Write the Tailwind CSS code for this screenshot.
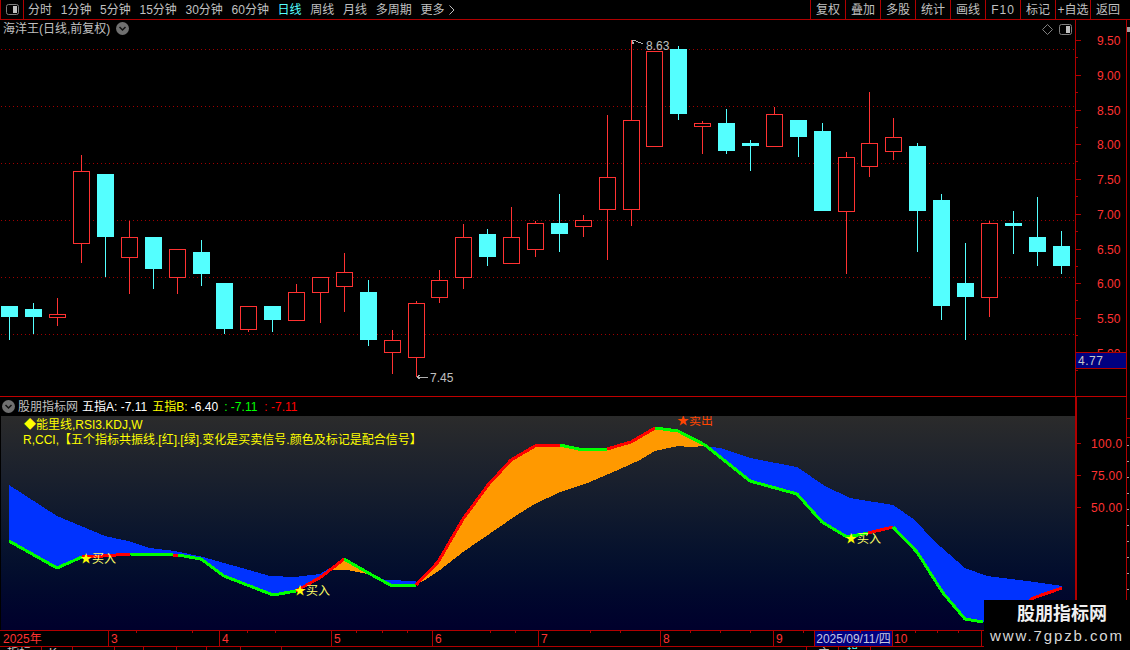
<!DOCTYPE html>
<html lang="zh-CN">
  <head>
    <meta charset="UTF-8" />
    <title>海洋王 日线</title>
    <script src="https://cdn.jsdelivr.net/npm/@tailwindcss/browser@4"></script>
  </head>
  <body class="bg-black">
    <div class="relative w-[1130px] h-[650px] overflow-hidden flex flex-col bg-black text-[12px] leading-none text-[#c0c0c0] font-['Liberation_Sans','Noto_Sans_CJK_SC',sans-serif]">
      <!-- top toolbar -->
      <div class="h-[20px] shrink-0 flex items-stretch border-b border-[#b00000]">
        <div class="w-[24px] flex items-center justify-center border-r border-l border-[#b00000]">
          <svg width="13" height="11" viewBox="0 0 13 11">
            <rect x="0.5" y="0.5" width="12" height="10" rx="2" fill="none" stroke="#808080" />
            <rect x="7" y="2" width="4" height="7" fill="#c0c0c0" />
          </svg>
        </div>
        <div class="flex items-center gap-[8.7px] pl-[4px]">
          <span>分时</span>
          <span>1分钟</span>
          <span>5分钟</span>
          <span>15分钟</span>
          <span>30分钟</span>
          <span>60分钟</span>
          <span class="text-[#55ffff]">日线</span>
          <span>周线</span>
          <span>月线</span>
          <span>多周期</span>
          <span class="flex items-center gap-[5px]">更多
            <svg width="6" height="10" viewBox="0 0 6 10"><path d="M0.5 0.5 L5 5 L0.5 9.5" fill="none" stroke="#c0c0c0" /></svg>
          </span>
        </div>
        <div class="ml-auto flex items-stretch mr-[5px]">
          <span class="w-[35px] flex items-center justify-center border-l border-[#b00000]">复权</span>
          <span class="w-[35px] flex items-center justify-center border-l border-[#b00000]">叠加</span>
          <span class="w-[35px] flex items-center justify-center border-l border-[#b00000]">多股</span>
          <span class="w-[35px] flex items-center justify-center border-l border-[#b00000]">统计</span>
          <span class="w-[35px] flex items-center justify-center border-l border-[#b00000]">画线</span>
          <span class="w-[35px] flex items-center justify-center border-l border-[#b00000] tracking-[1px]">F10</span>
          <span class="w-[35px] flex items-center justify-center border-l border-[#b00000]">标记</span>
          <span class="w-[35px] flex items-center justify-center border-l border-[#b00000]">+自选</span>
          <span class="w-[35px] flex items-center justify-center border-l border-[#b00000]">返回</span>
        </div>
      </div>

      <!-- price pane -->
      <div class="relative h-[376px] shrink-0 flex">
        <svg id="candles" class="block" width="1075" height="376" viewBox="0 20 1075 376" shape-rendering="crispEdges"></svg>
        <svg id="price-axis" class="block" width="55" height="376" viewBox="1075 20 55 376" shape-rendering="crispEdges"></svg>
        <div class="absolute left-[3px] top-[2px] flex items-center gap-[6px]">
          <span>海洋王(日线,前复权)</span>
          <svg width="13" height="13" viewBox="0 0 13 13">
            <circle cx="6.5" cy="6.5" r="6.5" fill="#707070" />
            <path d="M3.5 5 L6.5 8 L9.5 5" fill="none" stroke="#111" stroke-width="1.5" />
          </svg>
        </div>
        <div class="absolute left-[1042px] top-[4px] flex items-center gap-[6px]">
          <svg width="11" height="11" viewBox="0 0 11 11"><path d="M5.5 0.5 L10.5 5.5 L5.5 10.5 L0.5 5.5 Z" fill="none" stroke="#808080" /></svg>
          <svg width="13" height="11" viewBox="0 0 13 11">
            <rect x="0.5" y="0.5" width="12" height="10" rx="2" fill="none" stroke="#808080" />
            <rect x="7" y="2" width="4" height="7" fill="#c0c0c0" />
          </svg>
        </div>
        <div class="absolute left-[1075px] top-[332px] w-[52px] h-[17px] flex items-center pl-[2px] bg-[#000080] border border-[#b00000] text-[#c8c8c8] tracking-[0.5px]">4.77</div>
      </div>

      <div class="h-[1px] w-[1127px] shrink-0 bg-[#c00000]"></div>

      <!-- indicator pane -->
      <div class="h-[233px] shrink-0 flex">
        <div class="w-[1075px] flex flex-col">
          <div class="h-[19px] shrink-0 flex items-center pl-[2px]">
            <svg width="13" height="13" viewBox="0 0 13 13">
              <circle cx="6.5" cy="6.5" r="6.5" fill="#707070" />
              <path d="M3.5 5 L6.5 8 L9.5 5" fill="none" stroke="#111" stroke-width="1.5" />
            </svg>
            <span class="ml-[3px]">股朋指标网</span>
            <span class="ml-[4px] text-white">五指A: -7.11</span>
            <span class="ml-[5px] text-[#ffff00]">五指B: <span class="text-white">-6.40</span></span>
            <span class="ml-[6px] text-[#00ff00]">: -7.11</span>
            <span class="ml-[7px] text-[#ff0000]">: -7.11</span>
          </div>
          <div class="relative flex-1 ml-[1px] bg-linear-to-b from-[#2b2b2b] to-[#00002c]">
            <svg id="indicator" class="absolute inset-0 block" width="1074" height="214" viewBox="1 416 1074 214" shape-rendering="crispEdges"></svg>
            <div class="relative pl-[22px] pt-[2px] text-[#ffff00] leading-[15px]">
              <p class="pl-[1px]">◆能里线,RSI3.KDJ,W</p>
              <p>R,CCI,【五个指标共振线.[红].[绿].变化是买卖信号.颜色及标记是配合信号】</p>
            </div>
          </div>
        </div>
        <svg id="indicator-axis" class="block" width="55" height="233" viewBox="1075 397 55 233" shape-rendering="crispEdges"></svg>
      </div>

      <!-- time axis -->
      <div class="relative h-[17px] shrink-0 flex w-[1127px] border-t border-b border-[#b00000] text-[#ff3232] items-stretch">
        <span class="w-[108px] pl-[3px] flex items-center">2025年</span>
        <span class="w-[111px] pl-[2px] flex items-center border-l border-[#b00000]">3</span>
        <span class="w-[112px] pl-[2px] flex items-center border-l border-[#b00000]">4</span>
        <span class="w-[101px] pl-[2px] flex items-center border-l border-[#b00000]">5</span>
        <span class="w-[106px] pl-[2px] flex items-center border-l border-[#b00000]">6</span>
        <span class="w-[122px] pl-[2px] flex items-center border-l border-[#b00000]">7</span>
        <span class="w-[113px] pl-[2px] flex items-center border-l border-[#b00000]">8</span>
        <span class="w-[41px] pl-[2px] flex items-center border-l border-[#b00000]">9</span>
        <span class="w-[79px] flex items-center justify-center border-l border-r border-[#b00000] bg-[#000080] text-[#c8c8e0] whitespace-nowrap">2025/09/11/四</span>
        <span class="w-[88px] pl-[1px] flex items-center">10</span>
        <span class="w-[2px] border-l border-[#b00000]"></span>
        <svg id="time-ticks" class="absolute left-0 top-0" width="1075" height="3" shape-rendering="crispEdges"></svg>
      </div>

      <!-- clipped tab row along the bottom edge -->
      <div class="h-[3px] overflow-hidden flex items-start w-[1127px]">
        <span class="w-[42px] pl-[7px] border-r border-[#b00000] h-[3px]">指标</span>
        <span class="w-[31px] pl-[7px] border-r border-[#b00000] h-[3px]">K</span>
        <span class="w-[42px] border-r border-[#b00000] h-[3px]"></span>
        <span class="w-[29px] border-r border-[#b00000] h-[3px]"></span>
        <span class="w-[33px] border-r border-[#b00000] h-[3px]"></span>
        <span class="w-[30px] border-r border-[#b00000] h-[3px]"></span>
        <span class="w-[34px] border-r border-[#b00000] h-[3px]"></span>
        <span class="w-[41px] border-r border-[#b00000] h-[3px]"></span>
        <span class="w-[525px] border-r border-[#b00000] h-[3px]"></span>
        <span class="w-[32px] pl-[11px] border-r border-[#b00000] h-[3px]">主</span>
        <span class="w-[32px] pl-[8px] text-[#55ffff] border-r border-[#b00000] h-[3px]">操盘</span>
      </div>

      <!-- site watermark over the corner -->
      <div class="absolute left-[984px] top-[600px] w-[146px] h-[50px] bg-black flex flex-col items-center pt-[4px]">
        <span class="ml-[10px] text-[18px] font-bold leading-[20px] text-[#f0f0f0]">股朋指标网</span>
        <span class="mt-[4px] text-[15px] leading-[16px] tracking-[1.9px] text-[#d8d8d8] whitespace-nowrap">www.7gpzb.com</span>
      </div>
    </div>

    <script>
      const NS = "http://www.w3.org/2000/svg";
      const RED = "#ff3232";
      const CYAN = "#54ffff";
      const AXIS = "#b00000";

      function add(svg, tag, attrs, text) {
        const el = document.createElementNS(NS, tag);
        for (const k in attrs) el.setAttribute(k, attrs[k]);
        if (text) el.textContent = text;
        svg.appendChild(el);
        return el;
      }

      // [x, up?, wick top, body top, body bottom, wick bottom]
      const bars = [
        [9, 0, 306, 306, 317, 340], [33, 0, 303, 309, 317, 334], [57, 1, 298, 314, 317, 326],
        [81, 1, 155, 171, 243, 263], [105, 0, 174, 174, 237, 277], [129, 1, 221, 237, 257, 294],
        [153, 0, 237, 237, 269, 289], [177, 1, 249, 249, 277, 294], [201, 0, 240, 252, 274, 286],
        [224, 0, 283, 283, 329, 334], [248, 1, 306, 306, 329, 332], [272, 0, 306, 306, 320, 332],
        [296, 1, 284, 292, 320, 320], [320, 1, 277, 277, 292, 323], [344, 1, 253, 272, 286, 312],
        [368, 0, 280, 292, 340, 346], [392, 1, 330, 340, 352, 374], [416, 1, 301, 303, 357, 377],
        [439, 1, 270, 280, 297, 303], [463, 1, 224, 237, 277, 289], [487, 0, 229, 234, 257, 266],
        [511, 1, 207, 237, 263, 263], [535, 1, 221, 223, 249, 257], [559, 0, 194, 223, 234, 252],
        [583, 1, 215, 220, 226, 237], [607, 1, 115, 177, 209, 260], [631, 1, 40, 120, 209, 226],
        [654, 1, 51, 51, 146, 146], [678, 0, 46, 49, 114, 120], [702, 1, 121, 123, 126, 154],
        [726, 0, 109, 123, 151, 154], [750, 0, 140, 143, 146, 171], [774, 1, 107, 114, 146, 146],
        [798, 0, 120, 120, 137, 157], [822, 0, 123, 131, 211, 211], [846, 1, 152, 157, 211, 274],
        [869, 1, 92, 143, 166, 177], [893, 1, 118, 137, 151, 160], [917, 0, 143, 146, 211, 252],
        [941, 0, 194, 200, 306, 320], [965, 0, 243, 283, 297, 340], [989, 1, 221, 223, 297, 317],
        [1013, 0, 211, 223, 226, 254], [1037, 0, 197, 237, 252, 266], [1061, 0, 231, 246, 266, 274],
      ];

      const candles = document.getElementById("candles");
      // dotted price grid, one red dot every 4px
      [49, 106, 163, 220, 277, 334].forEach((y) => {
        for (let x = 1; x < 1075; x += 4) {
          add(candles, "rect", { x, y, width: 1, height: 1, fill: "#a00000" });
        }
      });
      bars.forEach(([x, up, wt, bt, bb, wb]) => {
        const color = up ? RED : CYAN;
        const cx = x + 0.5;
        add(candles, "line", { x1: cx, x2: cx, y1: wt, y2: bt, stroke: color });
        add(candles, "line", { x1: cx, x2: cx, y1: bb, y2: wb, stroke: color });
        if (up) {
          add(candles, "rect", { x: x - 8 + 0.5, y: bt + 0.5, width: 16, height: bb - bt, fill: "#000", stroke: color });
        } else {
          add(candles, "rect", { x: x - 8, y: bt, width: 17, height: bb - bt, fill: color });
        }
      });
      // high and low callouts
      add(candles, "path", { d: "M632 44 L632 40 L636 41 L643 44 M632 40 L634 44", fill: "none", stroke: "#b0b0b0" });
      add(candles, "text", { x: 646, y: 50, fill: "#c0c0c0", "font-size": 12 }, "8.63");
      add(candles, "path", { d: "M417 377 L428 377 M417 377 L420 375 M417 377 L420 379", fill: "none", stroke: "#b0b0b0" });
      add(candles, "text", { x: 430, y: 382, fill: "#c0c0c0", "font-size": 12 }, "7.45");

      // price axis
      const priceAxis = document.getElementById("price-axis");
      add(priceAxis, "line", { x1: 1075.5, x2: 1075.5, y1: 20, y2: 396, stroke: AXIS });
      add(priceAxis, "line", { x1: 1126.5, x2: 1126.5, y1: 20, y2: 396, stroke: AXIS });
      add(priceAxis, "rect", { x: 1127, y: 27, width: 3, height: 5, fill: "#a0a0a0" });
      ["9.50", "9.00", "8.50", "8.00", "7.50", "7.00", "6.50", "6.00", "5.50", "5.00"].forEach((label, i) => {
        const y = Math.round(40 + i * 34.75);
        add(priceAxis, "line", { x1: 1075, x2: 1081, y1: y + 0.5, y2: y + 0.5, stroke: AXIS });
        add(priceAxis, "line", { x1: 1075, x2: 1078, y1: Math.round(y + 17.4) + 0.5, y2: Math.round(y + 17.4) + 0.5, stroke: AXIS });
        add(priceAxis, "text", { x: 1097, y: y + 5, fill: RED, "font-size": 12 }, label);
      });

      // indicator axis
      const indAxis = document.getElementById("indicator-axis");
      add(indAxis, "rect", { x: 1075, y: 397, width: 2, height: 233, fill: AXIS });
      add(indAxis, "line", { x1: 1126.5, x2: 1126.5, y1: 397, y2: 630, stroke: AXIS });
      add(indAxis, "rect", { x: 1127, y: 418, width: 3, height: 1, fill: AXIS });
      add(indAxis, "rect", { x: 1127, y: 437, width: 3, height: 1, fill: AXIS });
      for (let y = 445; y < 600; y += 16) {
        add(indAxis, "rect", { x: 1127, y, width: 2, height: 1, fill: "#a0a0a0" });
      }
      [["100.0", 443], ["75.00", 475], ["50.00", 507]].forEach(([label, y]) => {
        add(indAxis, "line", { x1: 1077, x2: 1081, y1: y + 0.5, y2: y + 0.5, stroke: AXIS });
        add(indAxis, "text", { x: 1091, y: y + 5, fill: RED, "font-size": 12, "letter-spacing": "0.3" }, label);
      });

      // small ticks hanging from the time axis
      const timeTicks = document.getElementById("time-ticks");
      [136, 192, 247, 275, 356, 382, 407, 490, 515, 590, 620, 690, 720, 750, 803, 832, 860, 915, 937, 958].forEach((x) => {
        add(timeTicks, "rect", { x, y: 0, width: 1, height: 2, fill: AXIS });
      });

      // indicator bands and signal line
      const ind = document.getElementById("indicator");
      const pts = (list) => list.map((p) => p.join(",")).join(" ");
      const BLUE = "#0033ff";
      const ORANGE = "#ff9900";
      add(ind, "polygon", { fill: BLUE, points: pts([[9, 485], [57, 516], [105, 536], [128, 541], [150, 548], [175, 551], [203, 557], [270, 576], [295, 577], [320, 574], [330, 568], [320, 578], [297, 590], [273, 595], [224, 576], [200, 558], [175, 555], [125, 554], [82, 557], [57, 568], [9, 541]]) });
      add(ind, "polygon", { fill: ORANGE, points: pts([[328, 570], [344, 559], [372, 575], [347, 570]]) });
      add(ind, "polygon", { fill: BLUE, points: pts([[372, 575], [385, 580], [416, 581], [416, 585], [392, 586]]) });
      add(ind, "polygon", { fill: ORANGE, points: pts([[416, 585], [438, 562], [463, 519], [488, 485], [511, 460], [535, 446], [559, 445], [583, 450], [607, 449], [631, 442], [655, 428], [678, 431], [705, 446], [690, 447], [678, 446], [655, 451], [640, 460], [618, 470], [590, 482], [560, 492], [533, 505], [517, 515], [463, 552], [440, 570], [425, 580]]) });
      add(ind, "polygon", { fill: BLUE, points: pts([[705, 446], [720, 448], [750, 458], [797, 467], [825, 486], [850, 498], [893, 505], [915, 520], [933, 540], [965, 568], [987, 576], [1027, 581], [1062, 586], [1062, 588], [1033, 598], [1000, 622], [983, 622], [965, 619], [943, 593], [917, 552], [893, 527], [868, 533], [847, 537], [822, 522], [797, 494], [775, 487], [750, 481]]) });

      const GREEN = "#00ff00";
      const segments = [
        [GREEN, [[9, 541], [57, 568], [82, 557]]],
        ["#ff0000", [[82, 557], [103, 556], [130, 554]]],
        [GREEN, [[130, 554], [173, 555]]],
        ["#ff0000", [[173, 555], [178, 555]]],
        [GREEN, [[178, 555], [201, 559], [224, 576], [273, 595], [296, 591]]],
        ["#ff0000", [[296, 591], [321, 577], [344, 559]]],
        [GREEN, [[344, 559], [372, 575], [392, 586], [416, 585]]],
        ["#ff0000", [[416, 585], [438, 562], [463, 519], [488, 485], [511, 460], [535, 446], [560, 445]]],
        [GREEN, [[560, 445], [583, 450], [607, 449]]],
        ["#ff0000", [[607, 449], [631, 442], [655, 428]]],
        [GREEN, [[655, 428], [678, 431], [705, 445], [750, 481], [797, 494], [822, 522], [847, 537], [868, 533]]],
        ["#ff0000", [[868, 533], [893, 527]]],
        [GREEN, [[893, 527], [917, 552], [943, 593], [965, 619], [983, 622]]],
        ["#ff0000", [[1010, 620], [1033, 598], [1062, 588]]],
      ];
      segments.forEach(([color, list]) => {
        add(ind, "polyline", { points: pts(list), fill: "none", stroke: color, "stroke-width": 3 });
      });

      // buy and sell marks
      [[80, 563, "买入", "#ffff66", "#ffff00"], [294, 595, "买入", "#ffff66", "#ffff00"], [845, 543, "买入", "#ffff66", "#ffff00"], [677, 425, "卖出", "#ff4500", "#ff4500"]].forEach(([x, y, label, color, star]) => {
        const t = add(ind, "text", { x, y, "font-size": 12, fill: color });
        add(t, "tspan", { fill: star }, "★");
        add(t, "tspan", {}, label);
      });
    </script>
  </body>
</html>
